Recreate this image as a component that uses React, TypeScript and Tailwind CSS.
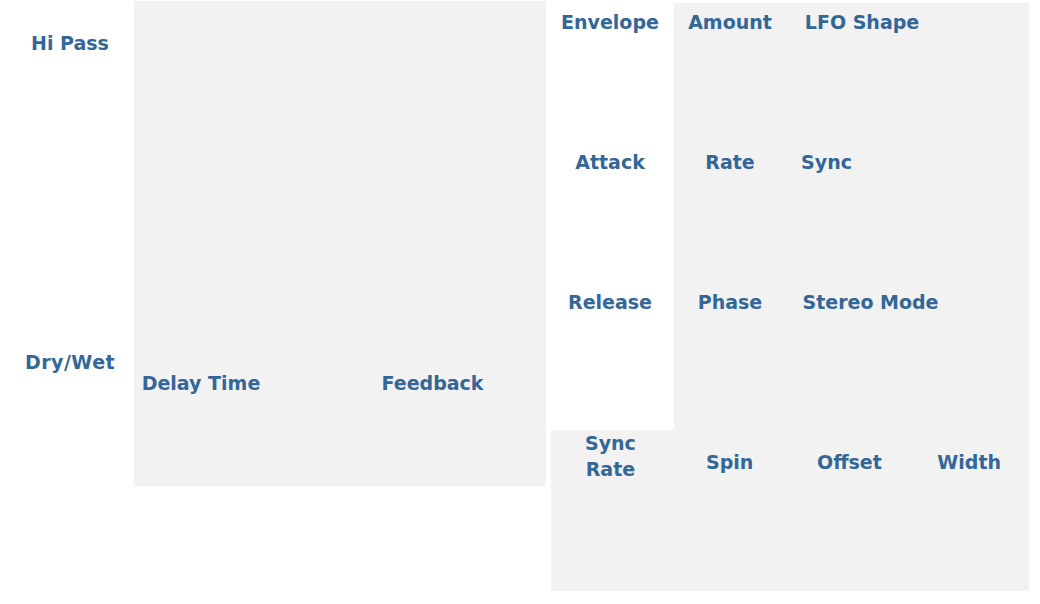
import React from "react";

const font = { fontFamily: '"DejaVu Sans", "Liberation Sans", sans-serif' };

function Label({ text, className = "" }: { text: string; className?: string }) {
  return (
    <div
      className={`flex items-center justify-center text-center text-[19px] font-bold leading-[26px] text-[#336699] ${className}`}
    >
      {text}
    </div>
  );
}

export default function App() {
  return (
    <div className="flex h-[604px] w-[1040px] overflow-hidden bg-white" style={font}>
      {/* left column: filter + mix labels */}
      <div className="flex w-[134px] shrink-0 flex-col pl-[6px]">
        <Label text="Hi Pass" className="mt-[23px] h-[40px]" />
        <Label text="Dry/Wet" className="mt-[279px] h-[40px] tracking-[0.5px]" />
      </div>

      {/* delay panel */}
      <div className="mt-[1px] h-[485px] w-[412px] shrink-0 bg-[#f2f2f2]">
        <div className="mt-[362px] flex">
          <Label text="Delay Time" className="h-[40px] w-[134px]" />
          <Label text="Feedback" className="ml-[96px] h-[40px] w-[137px]" />
        </div>
      </div>

      {/* right side */}
      <div className="flex w-[494px] shrink-0 flex-col">
        <div className="flex h-[430px]">
          {/* envelope */}
          <div className="flex w-[128px] shrink-0 flex-col">
            {["Envelope", "Attack", "Release"].map((t) => (
              <div key={t} className="h-[140px]">
                <Label text={t} className="h-[44px]" />
              </div>
            ))}
          </div>

          {/* lfo */}
          <div className="mt-[3px] h-[427px] w-[355px] shrink-0 bg-[#f2f2f2]">
            <div className="flex h-[140px]">
              <Label text="Amount" className="h-[38px] w-[112px]" />
              <Label text="LFO Shape" className="h-[38px] w-[152px]" />
            </div>
            <div className="flex h-[140px]">
              <Label text="Rate" className="h-[38px] w-[112px]" />
              <Label text="Sync" className="h-[38px] w-[81px]" />
            </div>
            <div className="flex h-[140px]">
              <Label text="Phase" className="h-[38px] w-[112px]" />
              <Label text="Stereo Mode" className="h-[38px] w-[169px]" />
            </div>
          </div>
        </div>

        {/* spin / stereo */}
        <div className="ml-[5px] flex h-[161px] w-[478px] bg-[#f2f2f2]">
          <Label text="Sync Rate" className="h-[52px] w-[119px] px-[30px]" />
          <Label text="Spin" className="h-[64px] w-[120px]" />
          <Label text="Offset" className="h-[64px] w-[120px]" />
          <Label text="Width" className="h-[64px] w-[120px]" />
        </div>
      </div>
    </div>
  );
}
